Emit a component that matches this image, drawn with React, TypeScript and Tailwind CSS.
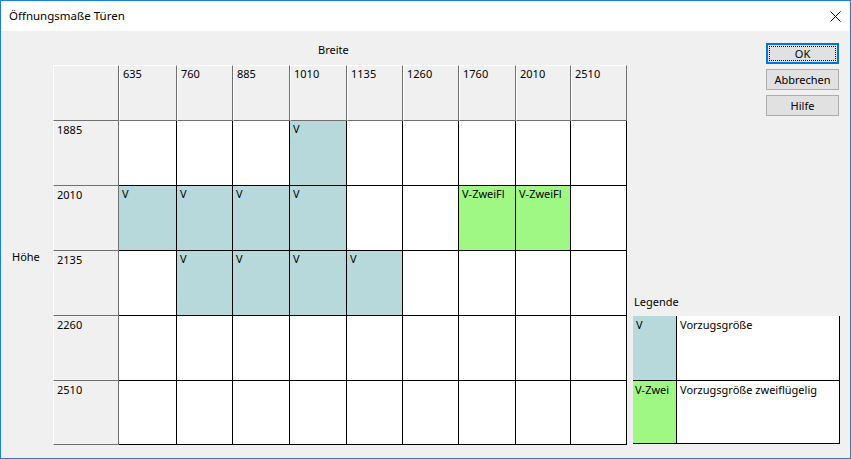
import React from "react";

const colLabels = ["635", "760", "885", "1010", "1135", "1260", "1760", "2010", "2510"];
const rowLabels = ["1885", "2010", "2135", "2260", "2510"];

const teal = new Set(["0-3", "1-0", "1-1", "1-2", "1-3", "2-1", "2-2", "2-3", "2-4"]);
const green = new Set(["1-6", "1-7"]);

function Cell({ r, c }: { r: number; c: number }) {
  const key = `${r}-${c}`;
  if (teal.has(key)) {
    return (
      <div className="border-r border-b border-black bg-[#b8d9dc] pl-[3px]">V</div>
    );
  }
  if (green.has(key)) {
    return (
      <div className="border-r border-b border-black bg-[#a0f884] pl-[3px] whitespace-nowrap overflow-hidden">
        V-ZweiFl
      </div>
    );
  }
  return <div className="border-r border-b border-black bg-white" />;
}

export default function App() {
  return (
    <div
      className="w-[851px] h-[459px] border border-[#1883d7] bg-[#f0f0f0] flex flex-col text-[11px] leading-[16px] text-black"
      style={{ fontFamily: '"Noto Sans", "Open Sans", sans-serif' }}
    >
      {/* Title bar */}
      <div className="h-[30px] bg-white flex items-center justify-between pl-[8px] pr-[9px] shrink-0 text-[11.5px]">
        <span>Öffnungsmaße Türen</span>
        <svg width="11" height="11" viewBox="0 0 11 11">
          <path d="M0.5 0.5 L10.5 10.5 M10.5 0.5 L0.5 10.5" stroke="#000" strokeWidth="1" />
        </svg>
      </div>

      {/* Body */}
      <div className="flex pt-[10px]">
        {/* Höhe label */}
        <div className="w-[52px] mt-[24px] h-[380px] flex items-center pl-[11px] pt-[4px]">
          <span>Höhe</span>
        </div>

        {/* Grid area */}
        <div className="flex flex-col">
          <div className="h-[24px] pl-[265px] pt-[1px]">Breite</div>
          <div className="grid grid-cols-[66px_58px_56px_57px_57px_56px_56px_57px_55px_56px] grid-rows-[56px_65px_65px_65px_65px_64px]">
            {/* corner */}
            <div className="border-l border-t border-white border-r-[#707070] border-b-[#707070] border-r border-b bg-[#f0f0f0]" />
            {colLabels.map((l) => (
              <div
                key={l}
                className="border-t border-l border-white border-r border-b border-r-[#707070] border-b-[#707070] bg-[#f0f0f0] pl-[3px]"
              >
                {l}
              </div>
            ))}
            {rowLabels.map((rl, r) => (
              <React.Fragment key={rl}>
                <div className="border-l border-white border-r border-b border-r-[#707070] border-b-[#707070] bg-[#f0f0f0] pl-[3px] pt-[1px]">
                  {rl}
                </div>
                {colLabels.map((_, c) => (
                  <Cell key={c} r={r} c={c} />
                ))}
              </React.Fragment>
            ))}
          </div>
        </div>

        {/* Right panel */}
        <div className="ml-[6px] w-[207px] flex flex-col h-[404px]">
          <div className="self-end mr-[1px] mt-[2px] flex flex-col gap-[5px]">
            <button className="relative w-[73px] h-[21px] border-2 border-[#0078d7] bg-[#e1e1e1] flex items-center justify-center">
              <span className="absolute inset-[1px] border border-dotted border-black" />
              <span className="relative">OK</span>
            </button>
            <button className="w-[73px] h-[21px] border border-[#adadad] bg-[#e1e1e1] flex items-center justify-center">
              Abbrechen
            </button>
            <button className="w-[73px] h-[21px] border border-[#adadad] bg-[#e1e1e1] flex items-center justify-center">
              Hilfe
            </button>
          </div>
          <div className="flex-1" />
          <div className="mb-[1px]">
            <div className="h-[22px] pl-[1px]">Legende</div>
            <div className="grid grid-cols-[44px_163px] grid-rows-[65px_63px]">
              <div className="border-r border-b border-black bg-[#b8d9dc] pl-[3px] pt-[1px]">V</div>
              <div className="border-r border-b border-black bg-white pl-[3px] pt-[1px]">Vorzugsgröße</div>
              <div className="border-r border-b border-black bg-[#a0f884] pl-[2px] pt-[1px] whitespace-nowrap overflow-hidden">
                V-Zwei
              </div>
              <div className="border-r border-b border-black bg-white pl-[3px] pt-[1px] whitespace-nowrap">
                Vorzugsgröße zweiflügelig
              </div>
            </div>
          </div>
        </div>
      </div>
    </div>
  );
}
